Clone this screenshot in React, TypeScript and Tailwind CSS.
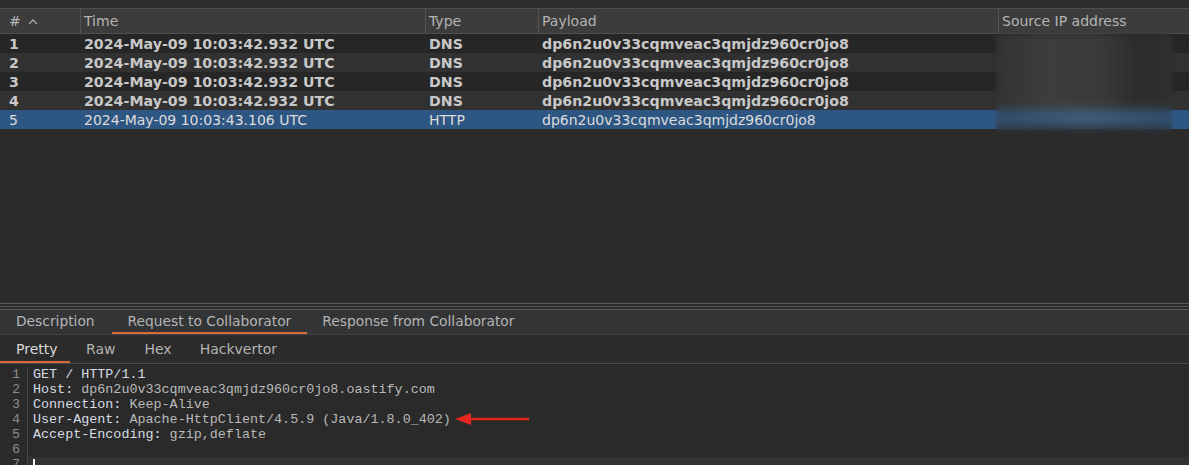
import React from 'react';

type Row = { id: number; time: string; type: string; payload: string; unread: boolean };

const rows: Row[] = [
  { id: 1, time: '2024-May-09 10:03:42.932 UTC', type: 'DNS', payload: 'dp6n2u0v33cqmveac3qmjdz960cr0jo8', unread: true },
  { id: 2, time: '2024-May-09 10:03:42.932 UTC', type: 'DNS', payload: 'dp6n2u0v33cqmveac3qmjdz960cr0jo8', unread: true },
  { id: 3, time: '2024-May-09 10:03:42.932 UTC', type: 'DNS', payload: 'dp6n2u0v33cqmveac3qmjdz960cr0jo8', unread: true },
  { id: 4, time: '2024-May-09 10:03:42.932 UTC', type: 'DNS', payload: 'dp6n2u0v33cqmveac3qmjdz960cr0jo8', unread: true },
  { id: 5, time: '2024-May-09 10:03:43.106 UTC', type: 'HTTP', payload: 'dp6n2u0v33cqmveac3qmjdz960cr0jo8', unread: false },
];

const codeLines: { key?: string; value: string }[] = [
  { value: 'GET / HTTP/1.1' },
  { key: 'Host:', value: ' dp6n2u0v33cqmveac3qmjdz960cr0jo8.oastify.com' },
  { key: 'Connection:', value: ' Keep-Alive' },
  { key: 'User-Agent:', value: ' Apache-HttpClient/4.5.9 (Java/1.8.0_402)' },
  { key: 'Accept-Encoding:', value: ' gzip,deflate' },
  { value: '' },
  { value: '' },
];

const cols = 'grid grid-cols-[80px_345px_113px_460px_1fr]';

const InteractionsTable: React.FC = (): React.ReactElement => {
  return (
    <div className="relative h-[303px] shrink-0 bg-[#2b2b2b]">
      <div className="h-[8px] bg-[#2c2c2c]" />
      <div className={`${cols} h-[26px] border-y border-[#4f4f4f] bg-[#3c3c3c] text-[14px] text-[#b4b4b4]`}>
        <div className="flex items-center gap-[7px] pl-[9px]">
          <span>#</span>
          <svg width="10" height="7" viewBox="0 0 10 7" fill="none" stroke="#a9a9a9" strokeWidth="1.3">
            <path d="M1 6 L5 2 L9 6" />
          </svg>
        </div>
        <div className="flex items-center border-l border-[#555] pl-[3px]">Time</div>
        <div className="flex items-center border-l border-[#555] pl-[3px]">Type</div>
        <div className="flex items-center border-l border-[#555] pl-[3px]">Payload</div>
        <div className="flex items-center border-l border-[#555] pl-[3px]">Source IP address</div>
      </div>
      {rows.map((r) => (
        <div
          key={r.id}
          className={`${cols} h-[19px] items-center ${
            r.unread ? 'text-[14.2px] font-bold text-[#c8c8c8]' : 'text-[14px] text-[#dcdcdc]'
          } ${r.id === 5 ? 'bg-[#2e5683]' : r.id % 2 === 1 ? 'bg-[#262626]' : 'bg-[#313131]'}`}
        >
          <div className="pl-[9px]">{r.id}</div>
          <div className="pl-[4px]">{r.time}</div>
          <div className="pl-[4px]">{r.type}</div>
          <div className="pl-[4px]">{r.payload}</div>
          <div />
        </div>
      ))}
      {/* blurred IP addresses */}
      <div className="absolute left-[995px] top-[33px] h-[100px] w-[178px] overflow-hidden">
        <div className="flex h-full flex-col blur-[5px]">
          <div className="h-[76px] bg-[linear-gradient(90deg,#333_0%,#3d3d3d_30%,#3a3a3a_60%,#2c2c2c_80%,#303030_100%)]" />
          <div className="h-[18px] bg-[linear-gradient(90deg,#324c69,#3f5b79_50%,#2f4d6c)]" />
          <div className="flex-1 bg-[#282828]" />
        </div>
      </div>
    </div>
  );
};

const MainTabs: React.FC = (): React.ReactElement => {
  const tabs = [
    { label: 'Description', active: false, cls: 'pl-[16px] pr-[17px]' },
    { label: 'Request to Collaborator', active: true, cls: 'px-[16px]' },
    { label: 'Response from Collaborator', active: false, cls: 'px-[15px]' },
  ];
  return (
    <div className="shrink-0">
      <div className="relative h-[7px] border-y border-[#5a5a5a] bg-[#2b2b2b]">
        <div className="absolute left-0 right-0 top-[2px] h-px bg-[#5a5a5a]" />
      </div>
      <div className="flex h-[25px] items-stretch border-b border-[#444] bg-[#333436] text-[13.8px] text-[#b4b4b4]">
        {tabs.map((t) => (
          <div
            key={t.label}
            className={`flex items-center ${t.cls} ${t.active ? 'border-b-2 border-[#d86a3c]' : 'border-b-2 border-transparent'}`}
          >
            {t.label}
          </div>
        ))}
      </div>
    </div>
  );
};

const SubTabs: React.FC = (): React.ReactElement => {
  const tabs = ['Pretty', 'Raw', 'Hex', 'Hackvertor'];
  return (
    <div className="flex h-[29px] shrink-0 items-stretch border-b border-[#4a4a4a] bg-[#2b2b2b] text-[14px] text-[#b4b4b4]">
      {tabs.map((t, i) => (
        <div
          key={t}
          className={`flex items-center pt-[2px] ${i === 0 ? 'w-[70px] pl-[16px] border-b-2 border-[#d86a3c] text-[#d8d8d8]' : 'border-b-2 border-transparent'} ${
            i === 1 ? 'pl-[16px] pr-[16px]' : i === 2 ? 'pl-[13px] pr-[15px]' : i === 3 ? 'pl-[13px]' : ''
          }`}
        >
          {t}
        </div>
      ))}
    </div>
  );
};

const CodeView: React.FC = (): React.ReactElement => {
  return (
    <div className="flex flex-1 bg-[#2a2a2a] pt-[3px] font-['Liberation_Mono',monospace] text-[13.4px] leading-[15px]">
      <div className="w-[28px] border-r border-[#464646] pr-[7px] text-right text-[#8a8a8a]">
        {codeLines.map((_, i) => (
          <div key={i} className="h-[15px]">
            {i + 1}
          </div>
        ))}
      </div>
      <div className="flex-1 text-[#b9b9b9]">
        {codeLines.map((l, i) => (
          <div key={i} className={`relative h-[15px] whitespace-pre pl-[5px] ${i === 6 ? 'bg-[#323335]' : ''}`}>
            {l.key && <span className="text-[#d6dce4]">{l.key}</span>}
            {i === 0 ? <span className="text-[#d6dce4]">{l.value}</span> : l.value}
            {i === 6 && <span className="absolute left-[5px] top-[2px] h-[13px] w-[2px] bg-white" />}
            {i === 3 && (
              <svg className="absolute left-[426px] top-[0px]" width="78" height="14" viewBox="0 0 78 14">
                <line x1="12" y1="7" x2="75" y2="7" stroke="#e3261e" strokeWidth="2.4" />
                <path d="M1 7 L17 1 L17 13 Z" fill="#e3261e" />
              </svg>
            )}
          </div>
        ))}
      </div>
    </div>
  );
};

export default function App(): React.ReactElement {
  return (
    <div className="flex h-[465px] w-[1189px] flex-col overflow-hidden bg-[#2b2b2b] font-['DejaVu_Sans',sans-serif]">
      <InteractionsTable />
      <MainTabs />
      <SubTabs />
      <CodeView />
    </div>
  );
}
